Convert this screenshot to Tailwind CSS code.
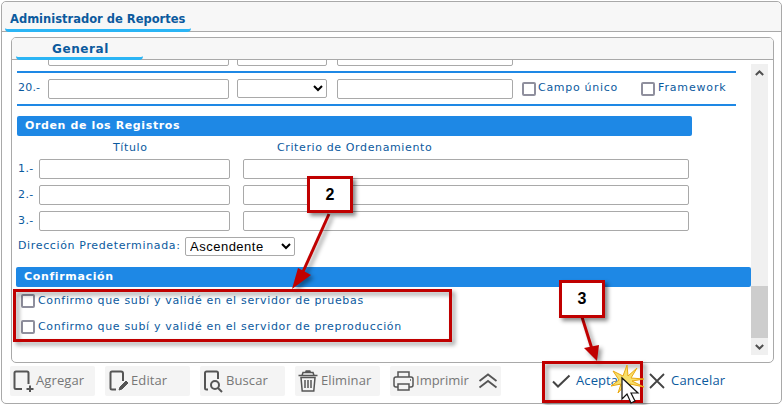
<!DOCTYPE html>
<html lang="es">
<head>
  <meta charset="UTF-8" />
  <title>Administrador de Reportes</title>
  <script src="https://cdn.jsdelivr.net/npm/@tailwindcss/browser@4"></script>
</head>
<body class="bg-white font-['DejaVu_Sans',sans-serif] text-[11px] text-[#0b5a9e] tracking-[0.4px] overflow-hidden">
  <div class="relative w-[783px] h-[405px] overflow-hidden">
    <div class="mx-px mt-px w-[781px] h-[403px] border border-[#a9a9a9] rounded-[5px] flex flex-col">
      <!-- cabecera -->
      <div class="h-[30px] shrink-0 bg-[#f7f7f7] border-b border-[#a9a9a9] rounded-t-[5px] pl-[3px] flex items-end">
        <div class="h-[30px] w-[186px] border-b-[3px] border-[#2bb5f5] rounded-b-sm pl-[5px] pt-[9px] font-bold text-[11.5px] tracking-[0px] leading-[16px] -mb-px whitespace-nowrap">Administrador de Reportes</div>
      </div>

      <!-- panel -->
      <div class="ml-[9px] mt-[5px] w-[763px] h-[326px] shrink-0 border border-[#a9a9a9] rounded-[5px] flex flex-col overflow-hidden">
        <div class="h-[22px] shrink-0 bg-[#f7f7f7] border-b border-[#a9a9a9] pl-[4px] flex items-end">
          <div class="h-[22px] w-[127px] border-b-[3px] border-[#2bb5f5] rounded-b-sm pl-[36px] pt-[3px] font-bold text-[12px] tracking-[0.6px] leading-[16px] -mb-px">General</div>
        </div>
        <div class="relative flex-1 overflow-hidden">
          <!-- contenido -->
          <div class="pl-[4px] flex flex-col">
            <div class="h-[6px] pl-[32px] flex gap-2 overflow-hidden items-end">
              <div class="w-[181px] h-5 shrink-0 border border-[#a9a9a9] rounded-[2px]"></div>
              <div class="w-[90px] h-5 shrink-0 border border-[#a9a9a9] rounded-[2px] ml-0"></div>
              <div class="w-[176px] h-5 shrink-0 border border-[#a9a9a9] rounded-[2px] ml-[2px]"></div>
            </div>
            <div class="mt-[5px] w-[719px] h-[2px] bg-[#1e88e5] ml-px"></div>
            <div class="h-[31px] flex items-center w-[719px]">
              <span class="w-[32px] pl-[2px] shrink-0 tracking-[0.2px]">20.-</span>
              <input class="w-[181px] h-5 border border-[#a9a9a9] rounded-[2px] shrink-0" />
              <select class="ml-2 w-[90px] h-[19px] border border-[#a9a9a9] rounded-[2px] shrink-0 bg-white -mt-px text-black"><option></option></select>
              <input class="ml-[10px] w-[176px] h-5 border border-[#a9a9a9] rounded-[2px] shrink-0" />
              <span class="ml-[9px] w-[14px] h-[14px] border-2 border-[#8f8f9d] rounded-[2px] shrink-0"></span>
              <span class="ml-[2px] w-[103px] shrink-0 tracking-[0.7px]">Campo único</span>
              <span class="w-[14px] h-[14px] border-2 border-[#8f8f9d] rounded-[2px] shrink-0"></span>
              <span class="ml-[3px] tracking-[0.85px]">Framework</span>
            </div>
            <div class="w-[719px] h-[2px] bg-[#1e88e5] ml-px"></div>

            <div class="mt-[10px] ml-px w-[675px] h-5 bg-[#1e88e5] rounded-[2px] pl-2 text-white font-bold tracking-[0.62px] leading-[20px]">Orden de los Registros</div>

            <div class="mt-[4px] h-[17px] flex items-center tracking-[0.62px]">
              <span class="ml-[97px] w-[164px]">Título</span>
              <span>Criterio de Ordenamiento</span>
            </div>
            <div class="mt-[2px] flex flex-col gap-[6px]">
              <div class="flex items-center">
                <span class="w-[23px] pl-[2px] shrink-0">1.-</span>
                <input class="w-[191px] h-5 border border-[#a9a9a9] rounded-[2px] shrink-0" />
                <input class="ml-[13px] w-[446px] h-5 border border-[#a9a9a9] rounded-[2px] shrink-0" />
              </div>
              <div class="flex items-center">
                <span class="w-[23px] pl-[2px] shrink-0">2.-</span>
                <input class="w-[191px] h-5 border border-[#a9a9a9] rounded-[2px] shrink-0" />
                <input class="ml-[13px] w-[446px] h-5 border border-[#a9a9a9] rounded-[2px] shrink-0" />
              </div>
              <div class="flex items-center">
                <span class="w-[23px] pl-[2px] shrink-0">3.-</span>
                <input class="w-[191px] h-5 border border-[#a9a9a9] rounded-[2px] shrink-0" />
                <input class="ml-[13px] w-[446px] h-5 border border-[#a9a9a9] rounded-[2px] shrink-0" />
              </div>
            </div>
            <div class="mt-[6px] flex items-center h-[19px] pl-[2px]">
              <span class="w-[167px] shrink-0 tracking-[0.64px]">Dirección Predeterminada:</span>
              <select class="w-[110px] h-[19px] border border-[#a9a9a9] rounded-[2px] bg-white text-[13px] text-black font-['Liberation_Sans',sans-serif] tracking-[0.5px]"><option>Ascendente</option></select>
            </div>

            <div class="mt-[11px] w-[735px] h-5 bg-[#1e88e5] rounded-[2px] pl-2 text-white font-bold tracking-[0.65px] leading-[20px]">Confirmación</div>
            <div class="mt-px pl-[5px] flex flex-col">
              <div class="h-[26px] flex items-center tracking-[0.66px]">
                <span class="w-[14px] h-[14px] border-2 border-[#8f8f9d] rounded-[2px] shrink-0"></span>
                <span class="ml-[3px]">Confirmo que subí y validé en el servidor de pruebas</span>
              </div>
              <div class="h-[26px] flex items-center tracking-[0.66px]">
                <span class="w-[14px] h-[14px] border-2 border-[#8f8f9d] rounded-[2px] shrink-0"></span>
                <span class="ml-[3px]">Confirmo que subí y validé en el servidor de preproducción</span>
              </div>
            </div>
          </div>

          <!-- barra de scroll -->
          <div class="absolute left-[739px] top-[4px] w-[17px] h-[291px] bg-[#f0f0f0] flex flex-col justify-between">
            <div class="h-[17px] flex items-center justify-center">
              <svg width="9" height="6" viewBox="0 0 9 6" fill="none" stroke="#505050" stroke-width="2"><path d="M.8 5 4.500 1.500 8.200 5"/></svg>
            </div>
            <div class="mt-[205px] h-[52px] bg-[#cdcdcd]"></div>
            <div class="h-[17px] flex items-center justify-center">
              <svg width="9" height="6" viewBox="0 0 9 6" fill="none" stroke="#505050" stroke-width="2"><path d="M.8 1 4.500 4.500 8.200 1"/></svg>
            </div>
          </div>
        </div>
      </div>

      <!-- barra de botones -->
      <div class="flex items-center mt-[3px] pl-[8px] h-[30px] text-[13px] text-[#777] tracking-[0.1px] font-['Open_Sans','DejaVu_Sans',sans-serif]">
        <div class="w-[85px] h-[30px] bg-[#f4f4f4] rounded-[2px] flex items-center pl-[2px] gap-px">
          <svg width="23" height="24" viewBox="0 0 23 24" fill="none" stroke="#555" stroke-width="2"><path d="M10 20H4a1.500 1.500 0 0 1-1.500-1.500V4A1.500 1.500 0 0 1 4 2.500h11A1.500 1.500 0 0 1 16.500 4v11"/><path d="M18 16.500v6.500M14.500 20H21.500"/></svg>
          <span>Agregar</span>
        </div>
        <div class="ml-[10px] w-[85px] h-[30px] bg-[#f4f4f4] rounded-[2px] flex items-center pl-[2px] gap-px">
          <svg width="23" height="24" viewBox="0 0 23 24" fill="none" stroke="#555" stroke-width="2"><path d="M9 20.500H5a1.500 1.500 0 0 1-1.500-1.500V4A1.500 1.500 0 0 1 5 2.500h9a2 2 0 0 1 2 2V12"/><path d="M12 21l1-3 6-6 2 2-6 6z" fill="#555" stroke-width="1"/></svg>
          <span>Editar</span>
        </div>
        <div class="ml-[10px] w-[85px] h-[30px] bg-[#f4f4f4] rounded-[2px] flex items-center pl-[2px] gap-px">
          <svg width="23" height="24" viewBox="0 0 23 24" fill="none" stroke="#555" stroke-width="2"><path d="M6 20.500H4.500A1.500 1.500 0 0 1 3 19V4a1.500 1.500 0 0 1 1.500-1.500h10A1.500 1.500 0 0 1 16 4v6"/><circle cx="13" cy="16" r="4"/><path d="M16 19l4 4"/></svg>
          <span>Buscar</span>
        </div>
        <div class="ml-[10px] w-[85px] h-[30px] bg-[#f4f4f4] rounded-[2px] flex items-center pl-[2px] gap-px">
          <svg width="23" height="24" viewBox="0 0 23 24" fill="none" stroke="#555" stroke-width="1.500"><path d="M1.500 6.500h19M5 6.500l1-3h10l1 3M8.500 3.500l.7-1.500h3.600l.7 1.500"/><path d="M4 8.500h14l-1.200 13.500H5.200z"/><path d="M8 11v8M11 11v8M14 11v8"/></svg>
          <span>Eliminar</span>
        </div>
        <div class="ml-[10px] w-[85px] h-[30px] bg-[#f4f4f4] rounded-l-[2px] flex items-center pl-[2px] gap-px">
          <svg width="23" height="24" viewBox="0 0 23 24" fill="none" stroke="#555" stroke-width="1.500"><path d="M6 8V3h11v5"/><rect x="2" y="8" width="19" height="10" rx="2"/><path d="M6 15h11v6H6z" fill="#f4f4f4"/><path d="M18 11h1"/></svg>
          <span class="tracking-normal">Imprimir</span>
        </div>
        <div class="w-[26px] h-[30px] bg-[#f4f4f4] rounded-r-[2px] flex items-center justify-center">
          <svg width="20" height="16" viewBox="0 0 20 16" fill="none" stroke="#555" stroke-width="1.800"><path d="M1.500 8 10 1.500 18.500 8M1.500 14.500 10 8l8.500 6.500"/></svg>
        </div>
        <div class="ml-[51px] flex items-center text-[#0b5a9e]">
          <svg width="19" height="14" viewBox="0 0 19 14" fill="none" stroke="#444" stroke-width="2"><path d="M1 7.500l5 5L17.500 1.500"/></svg>
          <span class="ml-[5px] w-[73px]">Aceptar</span>
          <svg width="16" height="16" viewBox="0 0 16 16" fill="none" stroke="#444" stroke-width="1.800"><path d="M1 1l14 14M15 1 1 15"/></svg>
          <span class="ml-[6px] tracking-[0.2px]">Cancelar</span>
        </div>
      </div>
    </div>

    <!-- anotaciones -->
    <svg class="absolute left-0 top-0 pointer-events-none drop-shadow-[3px_3px_2px_rgba(0,0,0,0.4)]" width="783" height="405" viewBox="0 0 783 405" fill="none">
      <path d="M329 214 302 274" stroke="#c00000" stroke-width="3"/>
      <path d="M292 289 298 268 311 275z" fill="#c00000"/>
      <path d="M582 317 592 349" stroke="#c00000" stroke-width="3"/>
      <path d="M597 361 584 348 599 345z" fill="#c00000"/>
      <rect x="14.500" y="290.500" width="436" height="50" stroke="#c00000" stroke-width="3"/>
      <rect x="543.500" y="362.500" width="98" height="39" stroke="#c00000" stroke-width="3"/>
    </svg>
    <div class="absolute left-[307px] top-[176px] w-[46px] h-[37px] bg-white border-[3px] border-[#c00000] shadow-[3px_3px_4px_rgba(0,0,0,0.45)] flex items-center justify-center font-['Liberation_Sans',sans-serif] font-bold text-[16px] text-black tracking-normal">2</div>
    <div class="absolute left-[559px] top-[280px] w-[46px] h-[38px] bg-white border-[3px] border-[#c00000] shadow-[3px_3px_4px_rgba(0,0,0,0.45)] flex items-center justify-center font-['Liberation_Sans',sans-serif] font-bold text-[16px] text-black tracking-normal">3</div>
    <svg class="absolute left-[608px] top-[364px]" width="38" height="42" viewBox="0 0 38 42">
      <path d="M3 22 11 16 5 7 15 12 19 1 20 12 29 4 23 14 36 15 24 17 36 23 22 20 23 30 17 21 10 29 13 20z" fill="#f8df6a" stroke="#eaa912" stroke-width="1"/>
      <path d="M14 14V35l5-5 4 9 4-2-4-8h7z" fill="#fff" stroke="#111" stroke-width="1.200"/>
    </svg>
  </div>
</body>
</html>
